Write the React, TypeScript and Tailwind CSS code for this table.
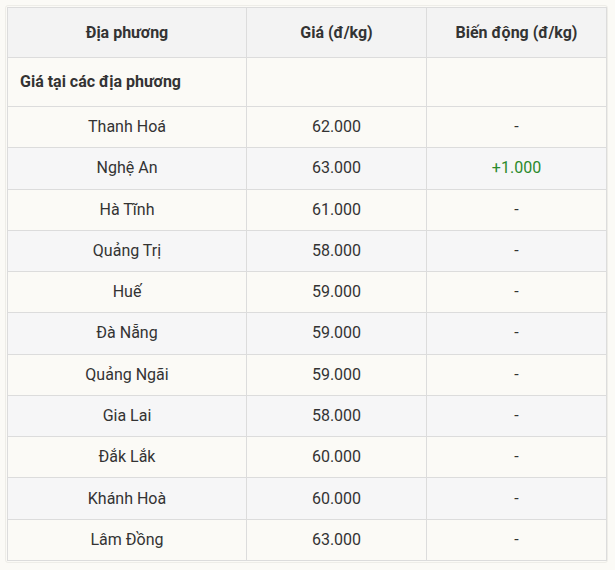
import React from "react";

const rows: [string, string, string][] = [
  ["Thanh Hoá", "62.000", "-"],
  ["Nghệ An", "63.000", "+1.000"],
  ["Hà Tĩnh", "61.000", "-"],
  ["Quảng Trị", "58.000", "-"],
  ["Huế", "59.000", "-"],
  ["Đà Nẵng", "59.000", "-"],
  ["Quảng Ngãi", "59.000", "-"],
  ["Gia Lai", "58.000", "-"],
  ["Đắk Lắk", "60.000", "-"],
  ["Khánh Hoà", "60.000", "-"],
  ["Lâm Đồng", "63.000", "-"],
];

export default function App() {
  return (
    <div
      className="w-[615px] h-[570px] bg-[#fbfaf6] pt-[5px] pl-[5px] overflow-hidden"
      style={{ fontFamily: "Roboto, 'Noto Sans', sans-serif" }}
    >
      <div className="w-[603px] border border-[#eeede8] rounded-[3px] p-[1px]">
        <table className="w-[599px] border-collapse table-fixed text-[#333333]">
          <colgroup>
            <col className="w-[239px]" />
            <col className="w-[180px]" />
            <col className="w-[180px]" />
          </colgroup>
          <thead>
            <tr className="h-[50px] bg-[#f3f3f3]">
              <th className="border border-[#dcdcdc] text-[16px] font-bold text-center">Địa phương</th>
              <th className="border border-[#dcdcdc] text-[16px] font-bold text-center">Giá (đ/kg)</th>
              <th className="border border-[#dcdcdc] text-[16px] font-bold text-center">Biến động (đ/kg)</th>
            </tr>
          </thead>
          <tbody>
            <tr className="h-[49px] bg-[#fbfaf6]">
              <td className="border border-[#dcdcdc] text-[16px] font-bold text-left pl-[12px]">Giá tại các địa phương</td>
              <td className="border border-[#dcdcdc]"></td>
              <td className="border border-[#dcdcdc]"></td>
            </tr>
            {rows.map(([name, price, change], i) => (
              <tr
                key={name}
                className={`h-[41.27px] ${i % 2 === 1 ? "bg-[#f6f6f7]" : "bg-[#fbfaf6]"}`}
              >
                <td className="border border-[#dcdcdc] text-[16px] text-center">{name}</td>
                <td className="border border-[#dcdcdc] text-[16px] text-center">{price}</td>
                <td
                  className={`border border-[#dcdcdc] text-[16px] text-center ${
                    change.startsWith("+") ? "text-[#2b8a2b]" : ""
                  }`}
                >
                  {change}
                </td>
              </tr>
            ))}
          </tbody>
        </table>
      </div>
    </div>
  );
}
